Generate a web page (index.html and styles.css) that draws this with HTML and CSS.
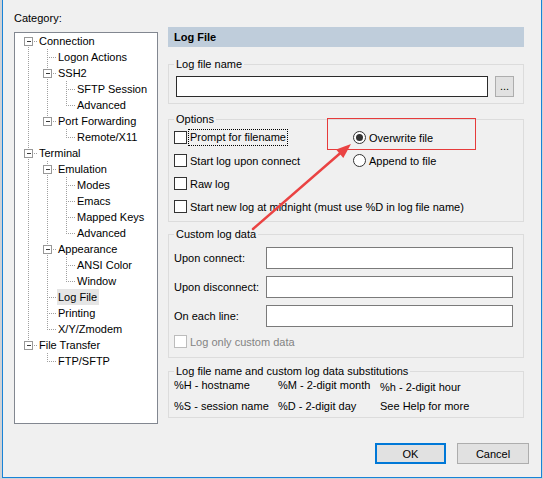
FILE: index.html
```html
<!DOCTYPE html>
<html>
<head>
<meta charset="utf-8">
<title>Session Options</title>
<link rel="stylesheet" href="styles.css">
</head>
<body>
<div class="win">
  <div class="main">
    <div class="left">
      <div class="cat-label">Category:</div>
      <div class="tree">
        <svg class="tree-lines" width="142" height="390" viewBox="15 33 142 390">
          <path class="dots" d="M28.5 41V345 M28 41.5H38 M28 153.5H38 M28 345.5H38
            M47.5 49V121 M47.5 161V329 M47.5 353V361
            M47 57.5H57 M47 73.5H57 M47 121.5H57 M47 169.5H57 M47 249.5H57 M47 297.5H57 M47 313.5H57 M47 329.5H57 M47 361.5H57
            M66.5 81V105 M66.5 129V137 M66.5 177V233 M66.5 257V281
            M66 89.5H76 M66 105.5H76 M66 137.5H76 M66 185.5H76 M66 201.5H76 M66 217.5H76 M66 233.5H76 M66 265.5H76 M66 281.5H76"/>
          <g class="exp">
            <rect x="24.5" y="37.5" width="8" height="8"/>
            <rect x="24.5" y="149.5" width="8" height="8"/>
            <rect x="24.5" y="341.5" width="8" height="8"/>
            <rect x="43.5" y="69.5" width="8" height="8"/>
            <rect x="43.5" y="117.5" width="8" height="8"/>
            <rect x="43.5" y="165.5" width="8" height="8"/>
            <rect x="43.5" y="245.5" width="8" height="8"/>
          </g>
          <path class="minus" d="M26.5 41.5H31 M26.5 153.5H31 M26.5 345.5H31 M45.5 73.5H50 M45.5 121.5H50 M45.5 169.5H50 M45.5 249.5H50"/>
        </svg>
        <div class="node l0">Connection</div>
        <div class="node l1">Logon Actions</div>
        <div class="node l1">SSH2</div>
        <div class="node l2">SFTP Session</div>
        <div class="node l2">Advanced</div>
        <div class="node l1">Port Forwarding</div>
        <div class="node l2">Remote/X11</div>
        <div class="node l0">Terminal</div>
        <div class="node l1">Emulation</div>
        <div class="node l2">Modes</div>
        <div class="node l2">Emacs</div>
        <div class="node l2">Mapped Keys</div>
        <div class="node l2">Advanced</div>
        <div class="node l1">Appearance</div>
        <div class="node l2">ANSI Color</div>
        <div class="node l2">Window</div>
        <div class="node l1 sel"><span class="sel-text">Log File</span></div>
        <div class="node l1">Printing</div>
        <div class="node l1">X/Y/Zmodem</div>
        <div class="node l0">File Transfer</div>
        <div class="node l1">FTP/SFTP</div>
      </div>
    </div>

    <div class="right">
      <div class="hdr">Log File</div>

      <fieldset class="grp g-name">
        <legend>Log file name</legend>
        <div class="name-row">
          <div class="field field-dark"></div>
          <div class="browse">...</div>
        </div>
      </fieldset>

      <fieldset class="grp g-opts">
        <legend>Options</legend>
        <div class="opts">
          <div class="chk"><span class="box"></span><span class="focus">Prompt for filename</span></div>
          <div class="rad"><span class="radio on"></span><span>Overwrite file</span></div>
          <div class="chk"><span class="box"></span><span>Start log upon connect</span></div>
          <div class="rad"><span class="radio"></span><span>Append to file</span></div>
          <div class="chk"><span class="box"></span><span>Raw log</span></div>
          <div></div>
          <div class="chk span2"><span class="box"></span><span>Start new log at midnight (must use %D in log file name)</span></div>
        </div>
      </fieldset>

      <fieldset class="grp g-custom">
        <legend>Custom log data</legend>
        <div class="custom">
          <div class="lbl">Upon connect:</div>
          <div class="field"></div>
          <div class="lbl">Upon disconnect:</div>
          <div class="field"></div>
          <div class="lbl">On each line:</div>
          <div class="field"></div>
          <div class="chk span2 disabled"><span class="box"></span><span>Log only custom data</span></div>
        </div>
      </fieldset>

      <fieldset class="grp g-subs">
        <legend>Log file name and custom log data substitutions</legend>
        <div class="subs">
          <div>%H - hostname</div>
          <div>%M - 2-digit month</div>
          <div class="low">%h - 2-digit hour</div>
          <div>%S - session name</div>
          <div>%D - 2-digit day</div>
          <div>See Help for more</div>
        </div>
      </fieldset>
    </div>
  </div>

  <div class="footer">
    <button class="btn btn-def">OK</button>
    <button class="btn">Cancel</button>
  </div>

  <svg class="annot" width="538" height="477" viewBox="3 0 538 477">
    <rect x="327.5" y="118.5" width="148" height="31" fill="none" stroke="#e63b3b" stroke-width="1"/>
    <line x1="253" y1="229" x2="341" y2="152.5" stroke="#ea4343" stroke-width="2.5" stroke-linecap="round"/>
    <polygon points="351,144 343.3,158 336.1,149.6" fill="#ea4343"/>
  </svg>
</div>
</body>
</html>
```

FILE: styles.css
```css
* {
  box-sizing: border-box;
}

html, body {
  margin: 0;
}

body {
  width: 543px;
  height: 479px;
  overflow: hidden;
  background: #cfd2d6;
  font-family: "Liberation Sans", Arial, sans-serif;
  font-size: 11px;
  color: #000;
}

.win {
  position: relative;
  margin-left: 2px;
  width: 540px;
  height: 478px;
  background: #f0f0f0;
  border: 1px solid #1883d7;
  border-top: 0;
  padding: 11px 0 0 11px;
}

.main {
  display: grid;
  grid-template-columns: 144px 356px;
  column-gap: 10px;
  align-items: start;
}

/* ---------- left: category tree ---------- */
.cat-label {
  height: 14px;
  line-height: 14px;
}

.tree {
  position: relative;
  margin-top: 7px;
  width: 144px;
  height: 392px;
  border: 1px solid #828790;
  background: #fff;
}

.tree-lines {
  position: absolute;
  left: 0;
  top: 0;
  shape-rendering: crispEdges;
}

.tree-lines .dots {
  fill: none;
  stroke: #a0a0a0;
  stroke-width: 1;
  stroke-dasharray: 1 1;
}

.tree-lines .exp rect {
  fill: #fff;
  stroke: #989898;
  stroke-width: 1;
}

.tree-lines .minus {
  fill: none;
  stroke: #3a3a3a;
  stroke-width: 1;
}

.node {
  position: relative;
  height: 16px;
  line-height: 16px;
  white-space: nowrap;
}

.l0 { padding-left: 24px; }
.l1 { padding-left: 43px; }
.l2 { padding-left: 62px; }

.node.sel {
  padding-left: 42px;
}

.sel-text {
  display: inline-block;
  padding: 0 2px 0 1px;
  background: #e5e5e5;
}

/* ---------- right panel ---------- */
.hdr {
  margin-top: 16px;
  height: 20px;
  line-height: 20px;
  padding-left: 6px;
  background: #bfcddb;
  font-weight: bold;
}

.grp {
  margin: 0;
  padding: 0;
  min-width: 0;
  border: 1px solid #dcdcdc;
}

.grp legend {
  margin-left: 5px;
  padding: 0 2px;
  height: 14px;
  line-height: 14px;
}

.g-name { margin-top: 10px; }
.g-opts { margin-top: 8px; }
.g-custom { margin-top: 5px; }
.g-subs { margin-top: 6px; }

.name-row {
  display: flex;
  gap: 7px;
  padding: 5px 9px 6px 7px;
}

.field {
  height: 22px;
  background: #fff;
  border: 1px solid #7a7a7a;
}

.name-row .field {
  flex: 1;
  height: 21px;
}

.field-dark {
  border-color: #2b2b2b;
}

.browse {
  width: 19px;
  height: 21px;
  background: #e1e1e1;
  border: 1px solid #adadad;
  text-align: center;
  line-height: 19px;
  letter-spacing: 0;
}

.opts {
  display: grid;
  grid-template-columns: 179px 1fr;
  grid-auto-rows: 23px;
  align-items: center;
  padding: 0 0 3px 5px;
}

.span2 {
  grid-column: 1 / -1;
}

.chk, .rad {
  display: flex;
  align-items: center;
  white-space: nowrap;
}

.chk { gap: 3px; }
.rad { gap: 3px; }

.box {
  flex: none;
  width: 13px;
  height: 13px;
  background: #fff;
  border: 1px solid #333;
}

.focus {
  margin-left: -2px;
  padding-left: 1px;
  padding-right: 1px;
  line-height: 15px;
  border: 1px dotted #000;
}

.radio {
  flex: none;
  position: relative;
  width: 13px;
  height: 13px;
  border-radius: 50%;
  background: #fff;
  border: 1px solid #333;
}

.radio.on::after {
  content: "";
  position: absolute;
  left: 2px;
  top: 2px;
  width: 7px;
  height: 7px;
  border-radius: 50%;
  background: #333;
}

.custom {
  display: grid;
  grid-template-columns: 92px 1fr;
  row-gap: 7px;
  align-items: center;
  padding: 6px 10px 8px 5px;
}

.custom .chk {
  height: 15px;
}

.disabled {
  color: #838383;
}

.disabled .box {
  border-color: #bcbcbc;
}

.subs {
  display: grid;
  grid-template-columns: 104px 102px 1fr;
  grid-auto-rows: 14px;
  row-gap: 7px;
  line-height: 14px;
  padding: 0 0 4px 5px;
  white-space: nowrap;
}

.subs .low {
  padding-top: 2px;
}

/* ---------- buttons ---------- */
.footer {
  display: flex;
  justify-content: flex-end;
  gap: 11px;
  margin-top: 19px;
  padding-right: 12px;
}

.btn {
  width: 72px;
  height: 21px;
  padding: 0;
  margin: 0;
  background: #e1e1e1;
  border: 1px solid #adadad;
  border-radius: 0;
  font: inherit;
  color: #000;
}

.btn-def {
  width: 71px;
  border: 2px solid #0078d7;
}

/* ---------- annotation overlay ---------- */
.annot {
  position: absolute;
  left: 0;
  top: 0;
  pointer-events: none;
}
```
